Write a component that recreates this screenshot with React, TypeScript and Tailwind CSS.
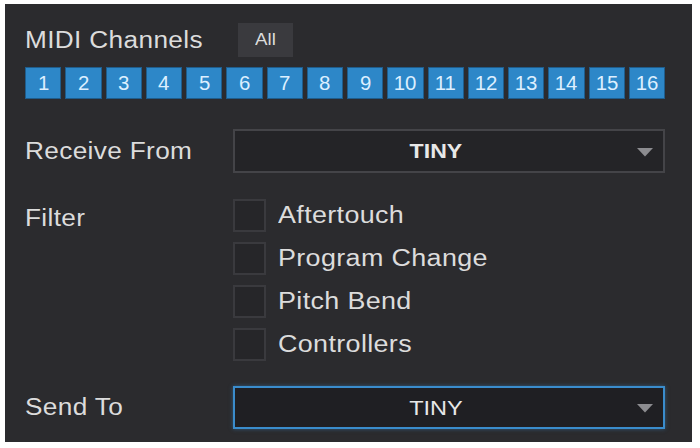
import React from "react";

const channels = Array.from({ length: 16 }, (_, i) => i + 1);
const filters = ["Aftertouch", "Program Change", "Pitch Bend", "Controllers"];

function Arrow() {
  return (
    <svg width="18" height="9" viewBox="0 0 18 9" className="block">
      <polygon points="1,0 17,0 9,8.5" fill="#8c8c90" />
    </svg>
  );
}

function Label({ children }: { children: React.ReactNode }) {
  return (
    <span className="inline-block origin-left scale-x-[1.14] whitespace-nowrap text-[23px] tracking-[0.3px]">
      {children}
    </span>
  );
}

function Dropdown({ active }: { active?: boolean }) {
  return (
    <div
      className={
        active
          ? "flex h-[43px] w-[432px] items-center border-2 border-[#3a8ccc] bg-[#1f1f23] shadow-[0_0_4px_rgba(58,140,204,0.5)]"
          : "flex h-[44px] w-[432px] items-center border-2 border-[#444448] bg-[#242427]"
      }
    >
      <div className="flex flex-1 justify-center">
        <span
          className={
            active
              ? "inline-block scale-x-[1.12] text-[21px] text-[#e8e8e8]"
              : "inline-block scale-x-[1.1] text-[21px] font-bold text-[#e8e8e8]"
          }
        >
          TINY
        </span>
      </div>
      <div className="pr-[9px] pt-[2px]">
        <Arrow />
      </div>
    </div>
  );
}

export default function App() {
  return (
    <div className="h-[448px] w-[700px] bg-white pl-[5px] pt-[4px]" style={{ fontFamily: '"Liberation Sans", Arial, sans-serif' }}>
      <div className="flex h-[438px] w-[687px] flex-col bg-[#2b2b2e] pl-[20px] pt-[19px] text-[#dcdcdc]">
        <div className="flex h-[34px] items-center">
          <div className="w-[213px]">
            <Label>MIDI Channels</Label>
          </div>
          <div className="flex h-[34px] w-[55px] items-center justify-center bg-[#3a3a3e] text-[17px] text-[#dcdcdc]">
            <span className="inline-block scale-x-[1.1]">All</span>
          </div>
        </div>
        <div className="mt-[10px] grid h-[32px] w-[640px] grid-cols-16 gap-[4px]">
          {channels.map((c) => (
            <div
              key={c}
              className="flex items-center justify-center border border-[#1f5d8c] bg-[#2d87c8] text-[20px] text-[#dcefff]"
            >
              <span className="inline-block scale-x-[1.02]">{c}</span>
            </div>
          ))}
        </div>
        <div className="mt-[30px] flex items-center">
          <div className="w-[208px]">
            <Label>Receive From</Label>
          </div>
          <Dropdown />
        </div>
        <div className="mt-[26px] flex">
          <div className="w-[208px] pt-[2px]">
            <Label>Filter</Label>
          </div>
          <div className="flex flex-col gap-[10px]">
            {filters.map((f) => (
              <div key={f} className="flex h-[33px] items-center">
                <div className="h-[33px] w-[33px] border-2 border-[#3a3a3e] bg-[#262629]" />
                <div className="ml-[12px]">
                  <span className="inline-block origin-left scale-x-[1.17] whitespace-nowrap text-[23px] tracking-[0.3px]">
                    {f}
                  </span>
                </div>
              </div>
            ))}
          </div>
        </div>
        <div className="mt-[25px] flex items-center">
          <div className="w-[208px]">
            <Label>Send To</Label>
          </div>
          <Dropdown active />
        </div>
      </div>
    </div>
  );
}
